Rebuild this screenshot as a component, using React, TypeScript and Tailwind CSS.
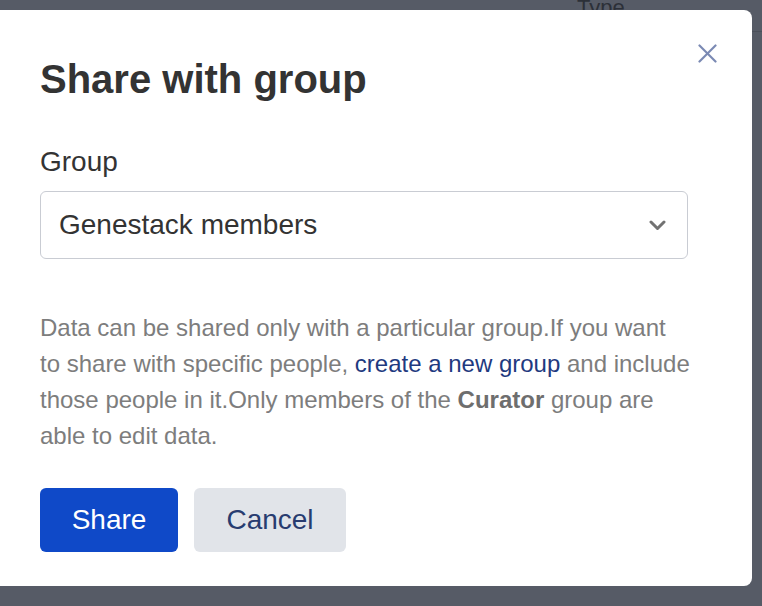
export default function App() {
  return (
    <div
      className="relative flex h-[606px] w-[762px] flex-col overflow-hidden bg-[#565b66] pt-[10px]"
      style={{ fontFamily: '"Liberation Sans", Arial, Helvetica, sans-serif' }}
    >
      {/* page behind the backdrop */}
      <div className="absolute left-[577px] top-[-5px] text-[22px] leading-[26px] text-[#2c3038]">Type</div>
      <div className="absolute left-[560px] top-[31px] h-px w-[202px] bg-[#4b505a]" />

      {/* modal */}
      <div className="relative flex w-[752px] flex-col items-start rounded-r-[8px] bg-white pb-[34px] pl-[40px] pt-[45px]">
        <button className="absolute right-[35px] top-[34px] flex h-[19px] w-[19px] items-center justify-center text-[#7a89b3]">
          <svg width="19" height="19" viewBox="0 0 19 19" fill="none" stroke="currentColor" strokeWidth="2.2" strokeLinecap="round">
            <path d="M1.5 1.5 17.5 17.5" />
            <path d="M17.5 1.5 1.5 17.5" />
          </svg>
        </button>

        <h2 className="text-[40px] font-bold leading-[48px] text-[#333333]">Share with group</h2>

        <label className="mt-[42px] text-[28px] leading-[34px] text-[#333333]">Group</label>

        <div className="mt-[12px] flex h-[68px] w-[648px] items-center justify-between rounded-[6px] border border-[#c9ccd3] pl-[18px] pr-[21px]">
          <span className="text-[28px] leading-[34px] text-[#333333]">Genestack members</span>
          <svg width="17" height="11" viewBox="0 0 17 11" fill="none" stroke="#727272" strokeWidth="3" strokeLinecap="round" strokeLinejoin="round">
            <path d="M2 2 8.5 8.5 15 2" />
          </svg>
        </div>

        <p className="mt-[51px] w-[651px] text-[24px] leading-[36px] text-[#7d7d7d]">
          Data can be shared only with a particular group.If you want to share with specific people,{" "}
          <a className="text-[#1f3a80]">create a new group</a> and include those people in it.Only members of the{" "}
          <b className="font-bold text-[#6e6e6e]">Curator</b> group are able to edit data.
        </p>

        <div className="mt-[34px] flex gap-[16px]">
          <button className="flex h-[64px] w-[138px] items-center justify-center rounded-[6px] bg-[#0f49c8] text-[28px] text-white">
            Share
          </button>
          <button className="flex h-[64px] w-[152px] items-center justify-center rounded-[6px] bg-[#e1e4e9] text-[28px] text-[#283c70]">
            Cancel
          </button>
        </div>
      </div>
    </div>
  );
}
